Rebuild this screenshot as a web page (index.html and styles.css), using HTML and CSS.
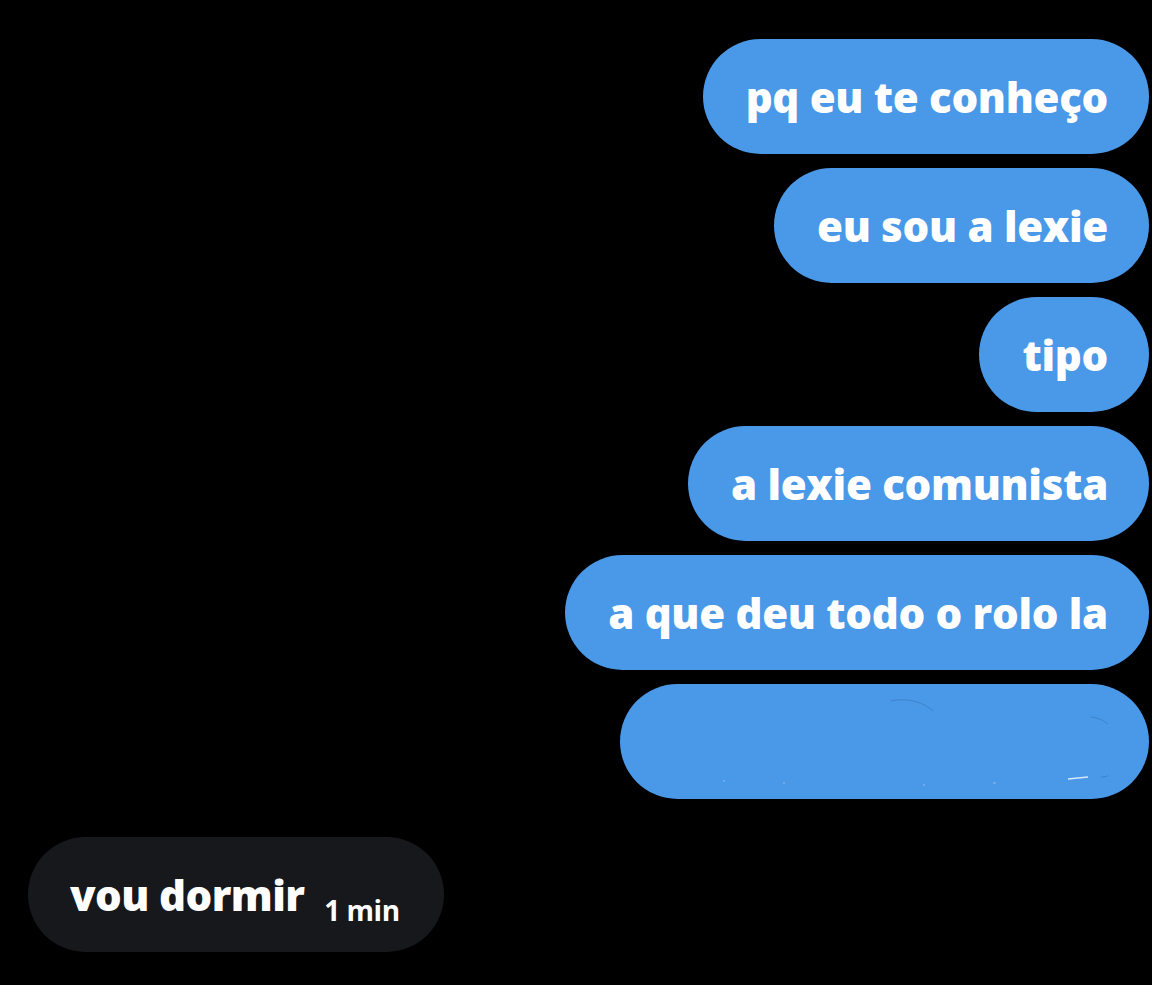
FILE: index.html
```html
<!DOCTYPE html>
<html lang="pt">
<head>
<meta charset="utf-8">
<link rel="stylesheet" href="styles.css">
</head>
<body>
<div class="chat">
  <div class="sent">
    <div class="bubble out">pq eu te conheço</div>
    <div class="bubble out">eu sou a lexie</div>
    <div class="bubble out">tipo</div>
    <div class="bubble out">a lexie comunista</div>
    <div class="bubble out">a que deu todo o rolo la</div>
    <div class="bubble out redacted">
      <svg class="blank" width="445" height="90" viewBox="0 0 445 90">
        <path d="M228 4 C 245 0, 262 6, 270 14" fill="none" stroke="#3d82cc" stroke-width="1"/>
        <path d="M470 20 C 490 22, 500 40, 498 60 C 497 72, 492 80, 480 80" transform="translate(-42,0)" fill="none" stroke="#3d82cc" stroke-width="1"/>
        <path d="M405 82 L 425 80" fill="none" stroke="#d8e8fa" stroke-width="1.5"/>
        <path d="M60 84 L 62 84 M120 86 L122 86 M260 88 L262 88 M330 86 L333 86" fill="none" stroke="#8fbcf0" stroke-width="1"/>
      </svg>
    </div>
  </div>
  <div class="received">
    <div class="bubble in"><span class="msg">vou dormir</span><span class="time">1 min</span></div>
  </div>
</div>
</body>
</html>
```
FILE: styles.css
```css
html, body {
  margin: 0;
  background: #000;
}
body {
  width: 1152px;
  height: 985px;
  overflow: hidden;
  font-family: "Open Sans", "Noto Sans", sans-serif;
  color: #fff;
}
.chat {
  display: flex;
  flex-direction: column;
  padding: 39px 3px 0 28px;
}
.sent {
  display: flex;
  flex-direction: column;
  align-items: flex-end;
  gap: 14px;
}
.received {
  display: flex;
  margin-top: 38px;
}
.bubble {
  height: 115px;
  box-sizing: border-box;
  border-radius: 58px;
  display: flex;
  align-items: center;
  font-size: 42px;
  font-weight: 800;
  letter-spacing: -0.3px;
  padding: 0 41px 0 43px;
  white-space: nowrap;
}
.out {
  background: #4a98e8;
}
.in {
  background: #17181b;
  padding: 0 44px 0 42px;
  align-items: baseline;
  padding-top: 29px;
}
.msg {
  letter-spacing: -0.6px;
}
.blank {
  display: block;
  width: 445px;
}
.time {
  font-size: 28px;
  font-weight: 700;
  letter-spacing: -0.5px;
  margin-left: 20px;
  position: relative;
  top: 10px;
}
```
